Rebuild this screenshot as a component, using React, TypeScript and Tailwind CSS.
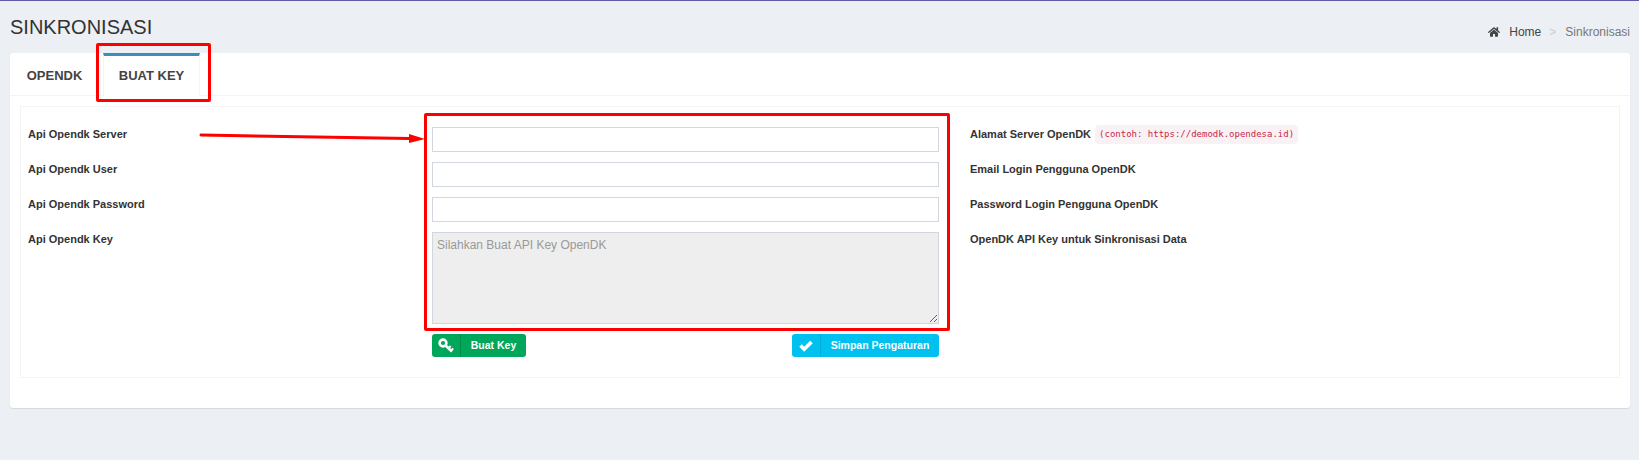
import React from 'react';
import { FaHome } from 'react-icons/fa';

const rows = [
  { label: 'Api Opendk Server', help: 'Alamat Server OpenDK', code: '(contoh: https://demodk.opendesa.id)' },
  { label: 'Api Opendk User', help: 'Email Login Pengguna OpenDK' },
  { label: 'Api Opendk Password', help: 'Password Login Pengguna OpenDK' },
];

const KeyIcon = () => (
  <svg width="16" height="15" viewBox="0 0 16 15" fill="none">
    <circle cx="5" cy="5" r="3.4" stroke="#fff" strokeWidth="2.6" />
    <path d="M7.5 7.5 L14 13.5" stroke="#fff" strokeWidth="2.6" />
    <path d="M10.5 10.2 L12.7 8 M13 12.6 L15.2 10.4" stroke="#fff" strokeWidth="2" />
  </svg>
);

const CheckIcon = () => (
  <svg width="14" height="12" viewBox="0 0 14 12" fill="none">
    <path d="M1.5 5.6 L5.2 9.3 L12.5 2" stroke="#fff" strokeWidth="3.6" />
  </svg>
);

const App: React.FC = () => {
  return (
    <div className="relative h-[460px] w-[1639px] overflow-hidden border-t border-t-[#605ca8] bg-[#ecf0f5] font-['Liberation_Sans',Arial,sans-serif] text-[11px] text-[#333]">
      {/* Header */}
      <div className="flex h-[52px] items-start justify-between pl-[10px] pr-[9px]">
        <h1 className="mt-[14px] text-[20px] leading-[24px] text-[#333]">SINKRONISASI</h1>
        <div className="mt-[23px] flex items-center text-[12px] leading-[16px]">
          <FaHome className="mr-[9px] text-[12px] text-[#444]" />
          <span className="text-[#444]">Home</span>
          <span className="pl-[8px] pr-[9px] text-[#ccc]">&gt;</span>
          <span className="text-[#777]">Sinkronisasi</span>
        </div>
      </div>

      {/* Card */}
      <div className="mx-[10px] h-[355px] w-[1620px] rounded-[3px] bg-white shadow-[0_1px_1px_rgba(0,0,0,0.1)]">
        {/* Tabs */}
        <div className="flex h-[43px] border-b border-b-[#f4f4f4] text-[13px] font-bold">
          <div className="flex w-[93px] items-center justify-center pr-[4px] pt-[3px] text-[#444]">OPENDK</div>
          <div className="flex h-[43px] w-[97px] items-center justify-center border-x border-t-[3px] border-x-[#f4f4f4] border-t-[#3c8dbc] bg-white text-[#444]">
            BUAT KEY
          </div>
        </div>

        {/* Form box */}
        <div className="mx-[10px] mt-[10px] h-[272px] border border-[#f4f4f4] pl-[7px] pt-[20px]">
          <div className="flex flex-col gap-[10px]">
            {rows.map((row) => (
              <div key={row.label} className="flex h-[25px]">
                <label className="w-[404px] font-bold leading-[15px] text-[#333]">{row.label}</label>
                <input className="h-[25px] w-[507px] border border-[#d2d6de] bg-white" />
                <div className="ml-[31px] flex h-[15px] items-center font-bold leading-[15px] text-[#333]">
                  {row.help}
                  {row.code && (
                    <code className="ml-[4px] rounded-[4px] bg-[#f9f2f4] px-[4px] py-[2px] font-['DejaVu_Sans_Mono',monospace] text-[9px] font-normal text-[#c7254e]">
                      {row.code}
                    </code>
                  )}
                </div>
              </div>
            ))}
            <div className="flex">
              <label className="w-[404px] font-bold leading-[15px] text-[#333]">Api Opendk Key</label>
              <textarea
                readOnly
                placeholder="Silahkan Buat API Key OpenDK"
                className="h-[92px] w-[507px] border border-[#d2d6de] bg-[#eee] px-[4px] py-[4px] text-[12px] leading-[16px] placeholder:text-[#999]"
              />
              <div className="ml-[31px] h-[15px] font-bold leading-[15px] text-[#333]">
                OpenDK API Key untuk Sinkronisasi Data
              </div>
            </div>
          </div>

          {/* Buttons */}
          <div className="ml-[404px] mt-[10px] flex w-[507px] items-center justify-between text-[10.5px] font-bold text-white">
            <button className="flex h-[23px] w-[94px] items-center rounded-[3px] bg-[#00a65a]">
              <span className="flex h-full w-[29px] items-center justify-center border-r border-r-[#008d4c]">
                <KeyIcon />
              </span>
              <span className="flex-1 text-center">Buat Key</span>
            </button>
            <button className="flex h-[23px] w-[147px] items-center rounded-[3px] bg-[#00c0ef]">
              <span className="flex h-full w-[29px] items-center justify-center border-r border-r-[#00acd6]">
                <CheckIcon />
              </span>
              <span className="flex-1 text-center">Simpan Pengaturan</span>
            </button>
          </div>
        </div>
      </div>

      {/* Annotations drawn over the screenshot */}
      <div className="absolute left-[96px] top-[42px] h-[59px] w-[115px] rounded-[2px] border-[3px] border-[#ff0000]" />
      <div className="absolute left-[424px] top-[112px] h-[218px] w-[526px] rounded-[2px] border-[3px] border-[#ff0000]" />
      <svg className="absolute left-[195px] top-[125px]" width="235" height="20" viewBox="0 0 235 20">
        <path d="M6 9 L215 12.5" stroke="#ff0000" strokeWidth="3" strokeLinecap="round" />
        <path d="M214 8 L230 13 L214 17 Z" fill="#ff0000" />
      </svg>
    </div>
  );
};

export default App;
